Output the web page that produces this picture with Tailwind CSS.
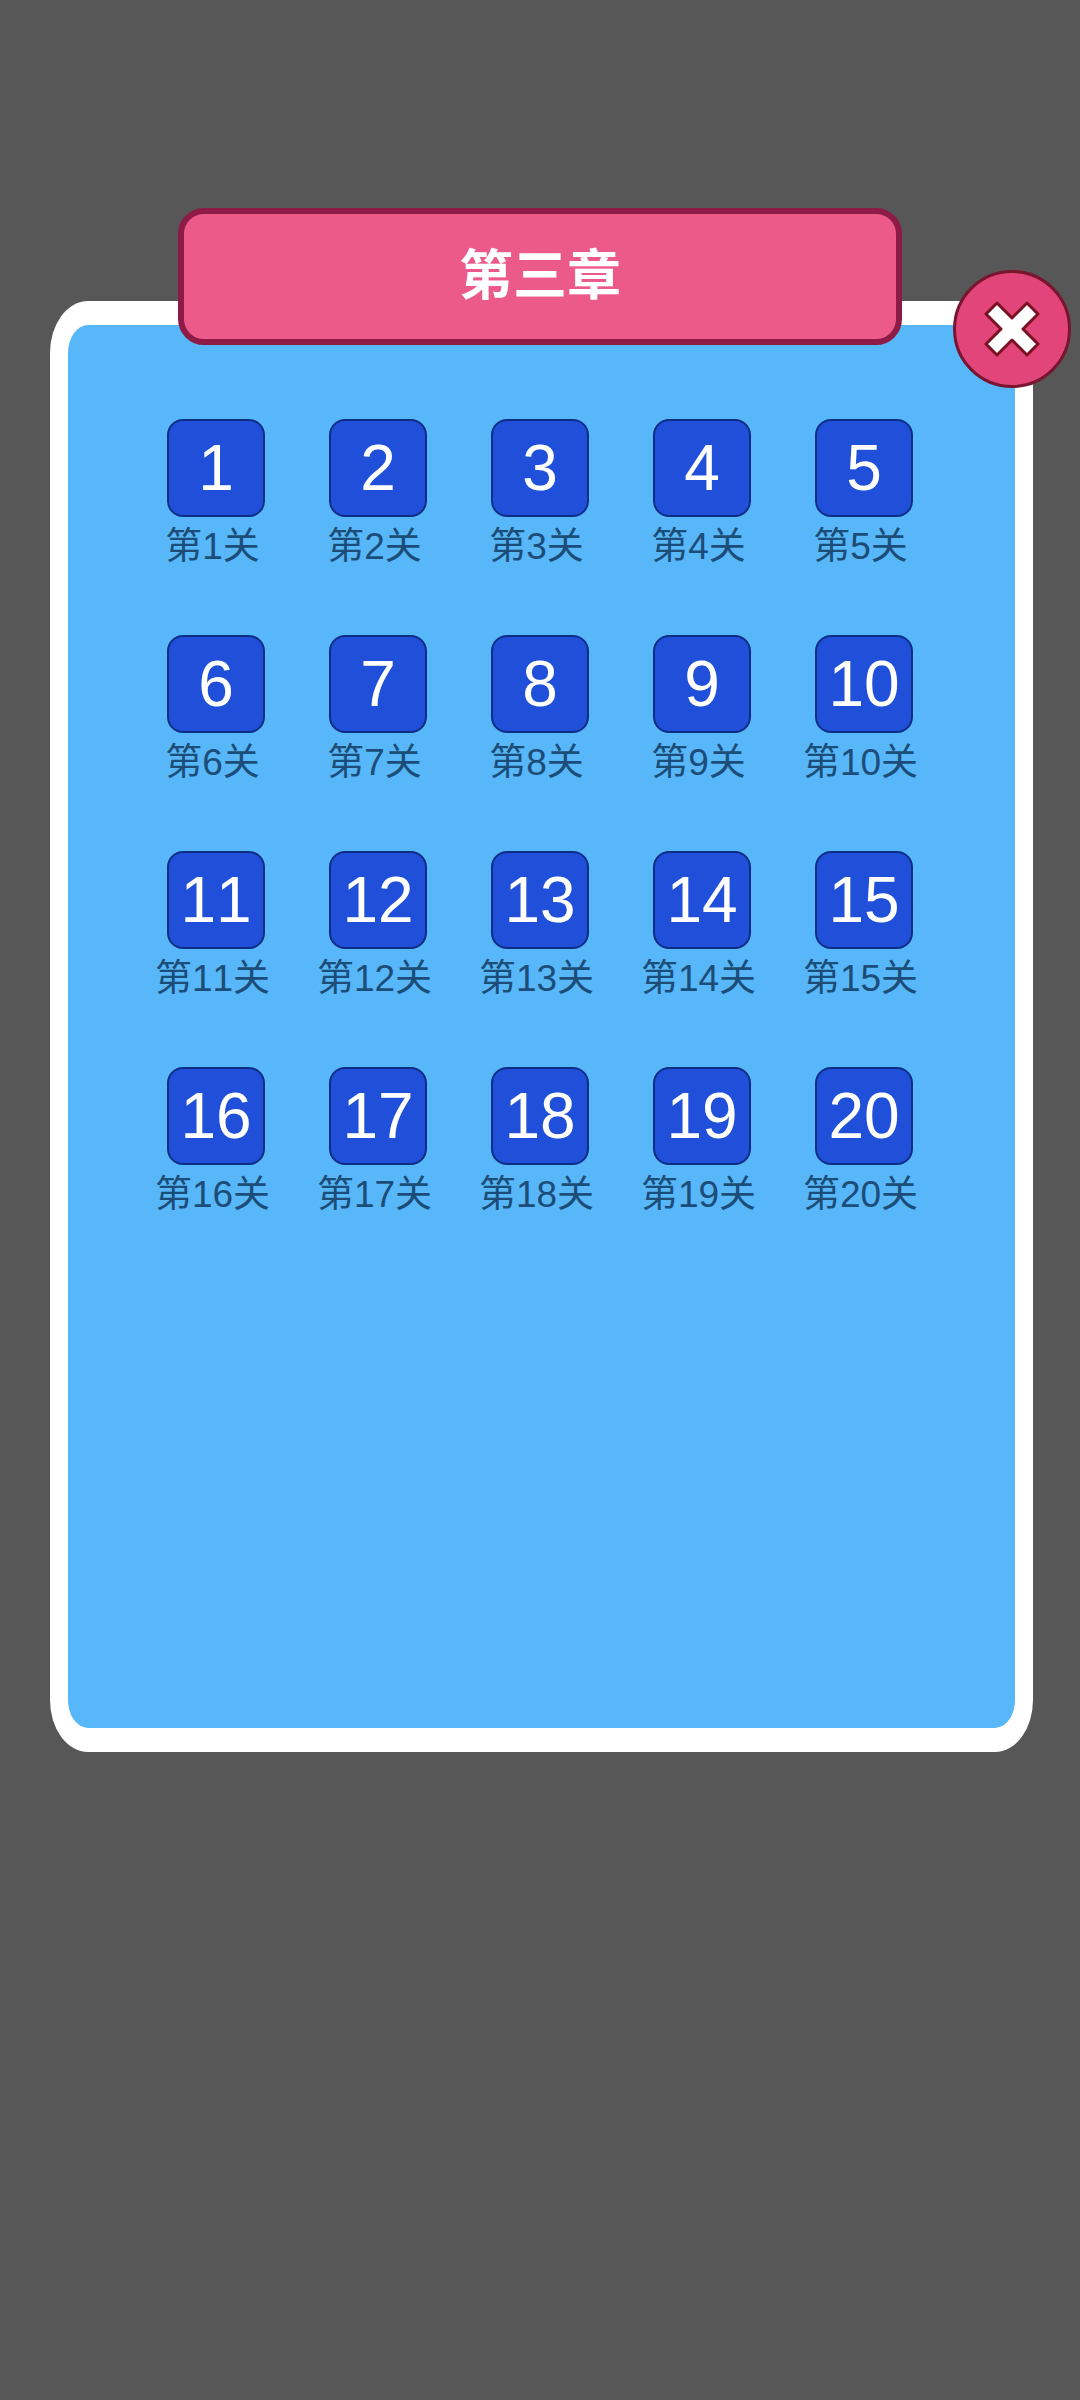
<!DOCTYPE html>
<html lang="zh-CN">

<head>
    <meta charset="UTF-8" />
    <meta name="viewport" content="width=device-width, initial-scale=1.0" />
    <title>第三章</title>
    <script src="https://cdn.jsdelivr.net/npm/@tailwindcss/browser@4"></script>
</head>

<body class="w-[1080px] h-[2400px] overflow-hidden bg-[#575757] [font-kerning:none] font-['Liberation_Sans','Noto_Sans_CJK_SC',sans-serif]">
    <div class="relative ml-[50px] mt-[301px] w-[983px] h-[1451px] bg-white rounded-[38px/52px] px-[18px] py-[24px]">
        <!-- Level panel -->
        <div class="h-full bg-[#57b7f9] rounded-[20px/28px] pl-[67px] pt-[94px]">
            <div id="levels" class="grid grid-cols-[repeat(5,162px)] auto-rows-[216px]">
                <div class="flex flex-col items-center"><button class="w-[98px] h-[98px] rounded-[16px] bg-[#204fd9] border-2 border-[#0e2d85] text-white text-[64px] leading-none">1</button><span class="mr-[7px] text-[37px] leading-[60px] text-[#1c4d78]">第1关</span></div>
                <div class="flex flex-col items-center"><button class="w-[98px] h-[98px] rounded-[16px] bg-[#204fd9] border-2 border-[#0e2d85] text-white text-[64px] leading-none">2</button><span class="mr-[7px] text-[37px] leading-[60px] text-[#1c4d78]">第2关</span></div>
                <div class="flex flex-col items-center"><button class="w-[98px] h-[98px] rounded-[16px] bg-[#204fd9] border-2 border-[#0e2d85] text-white text-[64px] leading-none">3</button><span class="mr-[7px] text-[37px] leading-[60px] text-[#1c4d78]">第3关</span></div>
                <div class="flex flex-col items-center"><button class="w-[98px] h-[98px] rounded-[16px] bg-[#204fd9] border-2 border-[#0e2d85] text-white text-[64px] leading-none">4</button><span class="mr-[7px] text-[37px] leading-[60px] text-[#1c4d78]">第4关</span></div>
                <div class="flex flex-col items-center"><button class="w-[98px] h-[98px] rounded-[16px] bg-[#204fd9] border-2 border-[#0e2d85] text-white text-[64px] leading-none">5</button><span class="mr-[7px] text-[37px] leading-[60px] text-[#1c4d78]">第5关</span></div>

                <div class="flex flex-col items-center"><button class="w-[98px] h-[98px] rounded-[16px] bg-[#204fd9] border-2 border-[#0e2d85] text-white text-[64px] leading-none">6</button><span class="mr-[7px] text-[37px] leading-[60px] text-[#1c4d78]">第6关</span></div>
                <div class="flex flex-col items-center"><button class="w-[98px] h-[98px] rounded-[16px] bg-[#204fd9] border-2 border-[#0e2d85] text-white text-[64px] leading-none">7</button><span class="mr-[7px] text-[37px] leading-[60px] text-[#1c4d78]">第7关</span></div>
                <div class="flex flex-col items-center"><button class="w-[98px] h-[98px] rounded-[16px] bg-[#204fd9] border-2 border-[#0e2d85] text-white text-[64px] leading-none">8</button><span class="mr-[7px] text-[37px] leading-[60px] text-[#1c4d78]">第8关</span></div>
                <div class="flex flex-col items-center"><button class="w-[98px] h-[98px] rounded-[16px] bg-[#204fd9] border-2 border-[#0e2d85] text-white text-[64px] leading-none">9</button><span class="mr-[7px] text-[37px] leading-[60px] text-[#1c4d78]">第9关</span></div>
                <div class="flex flex-col items-center"><button class="w-[98px] h-[98px] rounded-[16px] bg-[#204fd9] border-2 border-[#0e2d85] text-white text-[64px] leading-none">10</button><span class="mr-[7px] text-[37px] leading-[60px] text-[#1c4d78]">第10关</span></div>

                <div class="flex flex-col items-center"><button class="w-[98px] h-[98px] rounded-[16px] bg-[#204fd9] border-2 border-[#0e2d85] text-white text-[64px] leading-none">11</button><span class="mr-[7px] text-[37px] leading-[60px] text-[#1c4d78]">第11关</span></div>
                <div class="flex flex-col items-center"><button class="w-[98px] h-[98px] rounded-[16px] bg-[#204fd9] border-2 border-[#0e2d85] text-white text-[64px] leading-none">12</button><span class="mr-[7px] text-[37px] leading-[60px] text-[#1c4d78]">第12关</span></div>
                <div class="flex flex-col items-center"><button class="w-[98px] h-[98px] rounded-[16px] bg-[#204fd9] border-2 border-[#0e2d85] text-white text-[64px] leading-none">13</button><span class="mr-[7px] text-[37px] leading-[60px] text-[#1c4d78]">第13关</span></div>
                <div class="flex flex-col items-center"><button class="w-[98px] h-[98px] rounded-[16px] bg-[#204fd9] border-2 border-[#0e2d85] text-white text-[64px] leading-none">14</button><span class="mr-[7px] text-[37px] leading-[60px] text-[#1c4d78]">第14关</span></div>
                <div class="flex flex-col items-center"><button class="w-[98px] h-[98px] rounded-[16px] bg-[#204fd9] border-2 border-[#0e2d85] text-white text-[64px] leading-none">15</button><span class="mr-[7px] text-[37px] leading-[60px] text-[#1c4d78]">第15关</span></div>

                <div class="flex flex-col items-center"><button class="w-[98px] h-[98px] rounded-[16px] bg-[#204fd9] border-2 border-[#0e2d85] text-white text-[64px] leading-none">16</button><span class="mr-[7px] text-[37px] leading-[60px] text-[#1c4d78]">第16关</span></div>
                <div class="flex flex-col items-center"><button class="w-[98px] h-[98px] rounded-[16px] bg-[#204fd9] border-2 border-[#0e2d85] text-white text-[64px] leading-none">17</button><span class="mr-[7px] text-[37px] leading-[60px] text-[#1c4d78]">第17关</span></div>
                <div class="flex flex-col items-center"><button class="w-[98px] h-[98px] rounded-[16px] bg-[#204fd9] border-2 border-[#0e2d85] text-white text-[64px] leading-none">18</button><span class="mr-[7px] text-[37px] leading-[60px] text-[#1c4d78]">第18关</span></div>
                <div class="flex flex-col items-center"><button class="w-[98px] h-[98px] rounded-[16px] bg-[#204fd9] border-2 border-[#0e2d85] text-white text-[64px] leading-none">19</button><span class="mr-[7px] text-[37px] leading-[60px] text-[#1c4d78]">第19关</span></div>
                <div class="flex flex-col items-center"><button class="w-[98px] h-[98px] rounded-[16px] bg-[#204fd9] border-2 border-[#0e2d85] text-white text-[64px] leading-none">20</button><span class="mr-[7px] text-[37px] leading-[60px] text-[#1c4d78]">第20关</span></div>
            </div>
        </div>

        <!-- Chapter banner -->
        <div class="absolute left-[128px] top-[-93px] w-[724px] h-[137px] flex items-center justify-center bg-[#ec5a8a] border-[6px] border-[#8e1b45] rounded-[26px] text-white text-[54px] font-bold">第三章</div>

        <!-- Close button -->
        <button class="absolute left-[903px] top-[-31px] w-[118px] h-[118px] flex items-center justify-center rounded-full bg-[#e1457a] border-[3px] border-[#7a1530]">
            <svg width="56" height="56" viewBox="0 0 56 56">
                <path d="M13 2 L28 17 L43 2 L54 13 L39 28 L54 43 L43 54 L28 39 L13 54 L2 43 L17 28 L2 13 Z" fill="#fff" stroke="#7a1020" stroke-width="3" stroke-linejoin="round" />
            </svg>
        </button>
    </div>
</body>

</html>
